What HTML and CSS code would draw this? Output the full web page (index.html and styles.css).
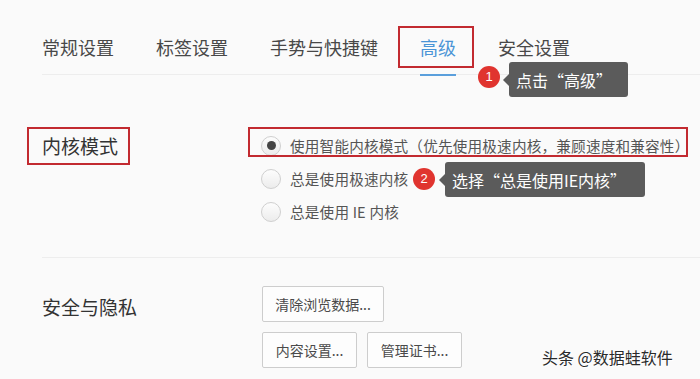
FILE: index.html
```html
<!DOCTYPE html>
<html lang="zh-CN">
<head>
<meta charset="utf-8">
<title>高级设置</title>
<link rel="stylesheet" href="styles.css">
</head>
<body>
<div class="page">
  <nav class="tabs">
    <span class="tab">常规设置</span>
    <span class="tab">标签设置</span>
    <span class="tab">手势与快捷键</span>
    <span class="tab active">高级<i class="mark mark-tab"></i></span>
    <span class="tab">安全设置</span>
  </nav>

  <section class="row kernel">
    <div class="label"><span class="label-text">内核模式<i class="mark mark-label"></i></span></div>
    <div class="options">
      <label class="option checked"><span class="radio"></span>使用智能内核模式（优先使用极速内核，兼顾速度和兼容性）<i class="mark mark-option"></i></label>
      <label class="option"><span class="radio"></span>总是使用极速内核</label>
      <label class="option"><span class="radio"></span>总是使用 IE 内核</label>
    </div>
  </section>

  <section class="row privacy">
    <div class="label label-privacy">安全与隐私</div>
    <div class="buttons">
      <div class="btn-line"><button class="btn btn-wide">清除浏览数据...</button></div>
      <div class="btn-line">
        <button class="btn">内容设置...</button>
        <button class="btn">管理证书...</button>
      </div>
    </div>
  </section>

  <span class="badge badge-1">1</span>
  <div class="tip tip-1">点击“高级”</div>
  <span class="badge badge-2">2</span>
  <div class="tip tip-2">选择“总是使用IE内核”</div>

  <div class="watermark">头条 @数据蛙软件</div>
</div>
</body>
</html>
```

FILE: styles.css
```css
* { box-sizing: border-box; }

html, body {
  margin: 0;
  padding: 0;
  background: #fafafa;
}

body {
  font-family: "Noto Sans CJK SC", "Noto Sans", "Liberation Sans", sans-serif;
  color: #444;
}

.page {
  position: relative;
  width: 700px;
  height: 379px;
  overflow: hidden;
}

/* Tabs */
.tabs {
  display: flex;
  gap: 42px;
  margin-left: 42px;
  padding-top: 35px;
  border-bottom: 1px solid #ededed;
}

.tab {
  position: relative;
  font-size: 18px;
  line-height: 24px;
  padding-bottom: 15px;
  color: #484848;
  white-space: nowrap;
}

.tab.active {
  color: #4a94d6;
  border-bottom: 2px solid #5a9fdc;
  margin-bottom: -2px;
}

/* red annotation frames */
.mark {
  position: absolute;
  border: 2px solid #c22a30;
  pointer-events: none;
}

.mark-tab {
  top: -9px;
  bottom: 6px;
  left: -22px;
  right: -18px;
}

/* Sections */
.row {
  display: flex;
  margin-left: 42px;
}

.label {
  width: 219px;
  flex: none;
  font-size: 19px;
  color: #333;
}

.label-text {
  position: relative;
  display: inline-block;
  line-height: 33px;
}

.mark-label {
  top: -2px;
  bottom: -3px;
  left: -15px;
  right: -12px;
}

.kernel {
  padding-top: 54px;
  padding-bottom: 29px;
}

.options {
  display: flex;
  flex-direction: column;
}

.option {
  position: relative;
  display: flex;
  align-items: center;
  height: 33px;
  font-size: 14.6px;
  letter-spacing: 0.2px;
  color: #555;
  white-space: nowrap;
}

.mark-option {
  top: -2px;
  bottom: 5px;
  left: -13px;
  width: 440px;
}

.radio {
  width: 20px;
  height: 20px;
  flex: none;
  margin-right: 9px;
  border: 1px solid #cfcfcf;
  border-radius: 50%;
  background: linear-gradient(#fdfdfd, #ececec);
  display: flex;
  align-items: center;
  justify-content: center;
}

.option.checked .radio::after {
  content: "";
  width: 9px;
  height: 9px;
  border-radius: 50%;
  background: #454545;
}

.privacy {
  border-top: 1px solid #ededed;
  padding-top: 28px;
}

.label-privacy {
  line-height: 36px;
  padding-top: 3px;
}

.buttons {
  display: flex;
  flex-direction: column;
  gap: 10px;
  margin-left: 1px;
}

.btn-line {
  display: flex;
  gap: 10px;
}

.btn {
  height: 36px;
  width: 95px;
  padding: 0;
  font-family: inherit;
  font-size: 14px;
  color: #4a4a4a;
  background: #fdfdfd;
  border: 1px solid #cdcdcd;
  border-radius: 2px;
  text-align: center;
}

.btn-wide { width: 122px; }

/* Annotation badges & tooltips */
.badge {
  position: absolute;
  width: 22px;
  height: 22px;
  border-radius: 50%;
  background: #e0342f;
  color: #fff;
  font-size: 13px;
  line-height: 22px;
  text-align: center;
  font-family: "Liberation Sans", sans-serif;
}

.badge-1 { left: 478px; top: 66px; }
.badge-2 { left: 413px; top: 168px; }

.tip {
  position: absolute;
  background: #5b5b5b;
  color: #fff;
  font-size: 16px;
  border-radius: 3px;
  display: flex;
  align-items: center;
  padding-left: 7px;
  white-space: nowrap;
}

.tip::before {
  content: "";
  position: absolute;
  left: -6px;
  top: 50%;
  margin-top: -6px;
  border-top: 6px solid transparent;
  border-bottom: 6px solid transparent;
  border-right: 6px solid #5b5b5b;
}

.tip-1 { left: 509px; top: 62px; width: 119px; height: 35px; }
.tip-2 { left: 445px; top: 162px; width: 200px; height: 35px; }

.watermark {
  position: absolute;
  left: 542px;
  top: 345px;
  font-size: 16px;
  line-height: 24px;
  color: #2a2a2a;
  text-shadow: 0 0 1px #fff, 1px 1px 0 #fff;
  white-space: nowrap;
}
```
